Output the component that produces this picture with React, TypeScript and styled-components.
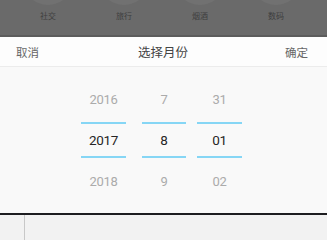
import styled, { createGlobalStyle } from "styled-components";

type Column = {
  items: string[];
  width: number;
  offset: number;
};

const categories = ["社交", "旅行", "烟酒", "数码"];

const columns: Column[] = [
  { items: ["2016", "2017", "2018"], width: 45, offset: 81 },
  { items: ["7", "8", "9"], width: 44, offset: 16 },
  { items: ["31", "01", "02"], width: 45, offset: 11 },
];

export default function App() {
  return (
    <Page>
      <GlobalStyle />
      <Backdrop>
        {categories.map((name) => (
          <Category key={name}>
            <Circle />
            <CategoryLabel>{name}</CategoryLabel>
          </Category>
        ))}
      </Backdrop>
      <Header>
        <HeaderButton>取消</HeaderButton>
        <Title>选择月份</Title>
        <HeaderButton>确定</HeaderButton>
      </Header>
      <Wheels>
        {columns.map((col) => (
          <Wheel key={col.items[1]} $width={col.width} $offset={col.offset}>
            <Item>{col.items[0]}</Item>
            <Selected>{col.items[1]}</Selected>
            <Item>{col.items[2]}</Item>
          </Wheel>
        ))}
      </Wheels>
      <Footer>
        <FooterCell />
      </Footer>
    </Page>
  );
}

const GlobalStyle = createGlobalStyle`
  html, body {
    margin: 0;
    padding: 0;
    background: #f2f2f2;
  }
  body {
    font-family: Roboto, "Noto Sans CJK SC", sans-serif;
  }
`;

const Page = styled.div`
  width: 327px;
  min-height: 100vh;
  overflow: hidden;
  display: flex;
  flex-direction: column;
`;

const Backdrop = styled.div`
  height: 35px;
  flex-shrink: 0;
  background: #6a6a6a;
  border-bottom: 2px solid #5c5c5c;
  display: grid;
  grid-template-columns: repeat(4, 76px);
  padding-left: 10px;
  overflow: hidden;
`;

const Category = styled.div`
  display: flex;
  flex-direction: column;
  align-items: center;
`;

const Circle = styled.div`
  width: 50px;
  height: 50px;
  margin-top: -45px;
  border-radius: 50%;
  background: #717171;
`;

const CategoryLabel = styled.div`
  margin-top: 6px;
  font-size: 8px;
  line-height: 10px;
  color: #3e3e3e;
  font-family: "Noto Sans CJK SC", sans-serif;
`;

const Header = styled.div`
  height: 29px;
  flex-shrink: 0;
  background: #fdfdfd;
  border-bottom: 1px solid #ececec;
  display: flex;
  align-items: center;
  justify-content: space-between;
  padding: 0 19px 0 16px;
  font-family: "Noto Sans CJK SC", sans-serif;
`;

const HeaderButton = styled.div`
  font-size: 11.5px;
  color: #666;
`;

const Title = styled.div`
  font-size: 12.5px;
  color: #444;
  margin-left: 2px;
`;

const Wheels = styled.div`
  height: 146px;
  flex-shrink: 0;
  box-sizing: border-box;
  padding-top: 12px;
  background: #f9f9f9;
  display: flex;
`;

const Wheel = styled.div<{ $width: number; $offset: number }>`
  width: ${(p) => p.$width}px;
  margin-left: ${(p) => p.$offset}px;
  display: flex;
  flex-direction: column;
`;

const Item = styled.div`
  height: 41px;
  display: flex;
  align-items: center;
  justify-content: center;
  font-size: 13px;
  letter-spacing: -0.3px;
  color: #ababab;
`;

const Selected = styled.div`
  height: 32px;
  margin: 2px 0 3px;
  border-top: 2px solid #86d6f5;
  border-bottom: 2px solid #86d6f5;
  display: flex;
  align-items: center;
  justify-content: center;
  font-size: 13.5px;
  letter-spacing: -0.3px;
  color: #262626;
`;

const Footer = styled.div`
  flex: 1;
  min-height: 3px;
  border-top: 2px solid #1d1d20;
  background: #f2f2f2;
  display: flex;
`;

const FooterCell = styled.div`
  width: 24px;
  border-right: 1px solid #c8c8c8;
`;
